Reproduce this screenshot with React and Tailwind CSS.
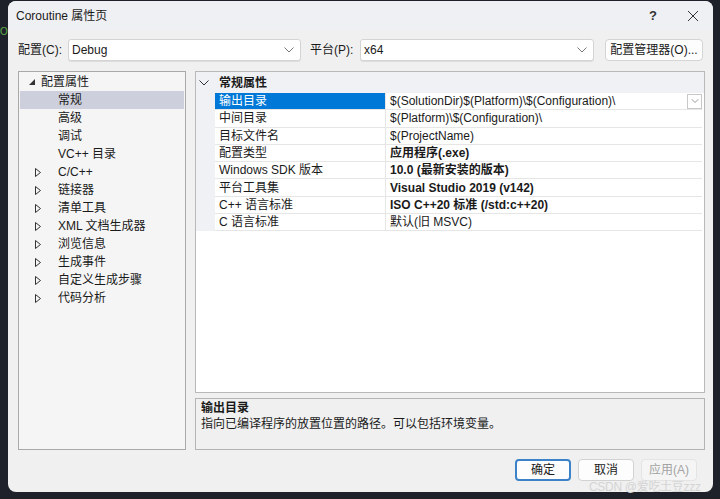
import { useState } from "react";

const font = { fontFamily: '"Liberation Sans", "Noto Sans CJK SC", sans-serif' };

const treeItems = [
  { label: "常规", selected: true },
  { label: "高级" },
  { label: "调试" },
  { label: "VC++ 目录" },
  { label: "C/C++", collapsed: true },
  { label: "链接器", collapsed: true },
  { label: "清单工具", collapsed: true },
  { label: "XML 文档生成器", collapsed: true },
  { label: "浏览信息", collapsed: true },
  { label: "生成事件", collapsed: true },
  { label: "自定义生成步骤", collapsed: true },
  { label: "代码分析", collapsed: true },
];

const props = [
  { name: "输出目录", value: "$(SolutionDir)$(Platform)\\$(Configuration)\\" },
  { name: "中间目录", value: "$(Platform)\\$(Configuration)\\" },
  { name: "目标文件名", value: "$(ProjectName)" },
  { name: "配置类型", value: "应用程序(.exe)", bold: true },
  { name: "Windows SDK 版本", value: "10.0 (最新安装的版本)", bold: true },
  { name: "平台工具集", value: "Visual Studio 2019 (v142)", bold: true },
  { name: "C++ 语言标准", value: "ISO C++20 标准 (/std:c++20)", bold: true },
  { name: "C 语言标准", value: "默认(旧 MSVC)" },
];

function Chevron({ className = "" }) {
  return (
    <svg width="10" height="6" viewBox="0 0 10 6" className={className}>
      <path d="M0.5 0.5 L5 5 L9.5 0.5" fill="none" stroke="currentColor" strokeWidth="1" />
    </svg>
  );
}

function Combo({ value, width }) {
  return (
    <div className={`${width} h-[22px] bg-white border border-[#d4d4d4] rounded-[3px] flex items-center justify-between pl-[3px] pr-[6px] shadow-[0_1px_0_rgba(0,0,0,0.08)]`}>
      <span>{value}</span>
      <Chevron className="text-[#777]" />
    </div>
  );
}

function Button({ children, primary, disabled }) {
  const base = "w-[56px] h-[22px] rounded-[4px] flex items-center justify-center";
  if (primary) return <div className={`${base} bg-[#fdfdfd] border-2 border-[#3b82c8]`}>{children}</div>;
  if (disabled) return <div className={`${base} bg-[#f5f5f5] border border-[#e4e4e4] text-[#a3a3a3]`}>{children}</div>;
  return <div className={`${base} bg-[#fdfdfd] border border-[#d2d2d2]`}>{children}</div>;
}

export default function App() {
  const [sel, setSel] = useState(0);
  return (
    <div className="w-[720px] h-[499px] bg-[#1e2129] relative overflow-hidden text-[12px] text-[#1a1a1a]" style={font}>
      <span className="absolute left-0 top-[24px] text-[10px] text-[#5fae4a]">O</span>

      <div className="ml-[8px] mt-[1px] w-[705px] h-[491px] rounded-[8px] bg-[#f0f0f0] flex flex-col overflow-hidden">
        {/* title bar */}
        <div className="h-[29px] flex items-center pl-[8px] pr-[14px] bg-[#eff0f3]">
          <span className="flex-1 pt-[1px]">Coroutine 属性页</span>
          <span className="text-[13px] font-bold mr-[30px] text-[#333]">?</span>
          <svg width="12" height="12" viewBox="0 0 12 12" className="text-[#333]">
            <path d="M1 1 L11 11 M11 1 L1 11" stroke="currentColor" strokeWidth="1" />
          </svg>
        </div>

        {/* config row */}
        <div className="flex items-center pl-[10px] pt-[9px]">
          <span className="w-[50px]">配置(C):</span>
          <Combo value="Debug" width="w-[233px]" />
          <span className="ml-[9px] w-[50px]">平台(P):</span>
          <Combo value="x64" width="w-[234px]" />
          <div className="ml-[11px] w-[98px] h-[22px] bg-[#fdfdfd] border border-[#d4d4d4] rounded-[4px] flex items-center justify-center">
            配置管理器(O)...
          </div>
        </div>

        {/* main */}
        <div className="flex mt-[10px] pl-[10px] pr-[8px] gap-[9px] h-[379px]">
          <div className="w-[168px] bg-[#f5f5f5] border border-[#a9a9a9] pt-[1px] px-[1px]">
            <div className="h-[18px] flex items-center">
              <svg width="6" height="6" viewBox="0 0 6 6" className="ml-[9px] mr-[6px]">
                <path d="M6 0 L6 6 L0 6 Z" fill="#333" />
              </svg>
              <span>配置属性</span>
            </div>
            {treeItems.map((t, i) => (
              <div key={i} className={`h-[18px] flex items-center ${t.selected ? "bg-[#cdd0dc]" : ""}`}>
                <span className="w-[27px] shrink-0 flex justify-end pr-[6px]">
                  {t.collapsed && (
                    <svg width="6" height="9" viewBox="0 0 6 9">
                      <path d="M0.5 0.5 L5.5 4.5 L0.5 8.5 Z" fill="none" stroke="#333" strokeWidth="1" />
                    </svg>
                  )}
                </span>
                <span className="ml-[11px]">{t.label}</span>
              </div>
            ))}
          </div>

          <div className="flex-1 flex flex-col gap-[5px]">
            <div className="h-[322px] bg-white border border-[#b9b9b9] flex flex-col">
              <div className="h-[21px] bg-[#f0f1f4] flex items-center shrink-0">
                <Chevron className="ml-[3px] text-[#333]" />
                <span className="ml-[10px] font-bold">常规属性</span>
              </div>
              {props.map((p, i) => (
                <div key={i} className="h-[17.3px] shrink-0 flex" onClick={() => setSel(i)}>
                  <div className="w-[19px] bg-[#f0f1f4]" />
                  <div className={`w-[171px] pl-[4px] flex items-center border-b border-r border-[#e6e6e6] ${sel === i ? "bg-[#0078d7] text-white" : ""}`}>
                    {p.name}
                  </div>
                  <div className={`flex-1 pl-[4px] flex items-center justify-between border-b border-[#e6e6e6] mr-[2px] ${p.bold ? "font-bold" : ""}`}>
                    <span>{p.value}</span>
                    {sel === i && (
                      <div className="w-[15px] h-[15px] border border-[#c8c8c8] bg-white flex items-center justify-center">
                        <Chevron className="text-[#777] scale-75" />
                      </div>
                    )}
                  </div>
                </div>
              ))}
            </div>
            <div className="flex-1 bg-[#f0f0f0] border border-[#b4b4b4] px-[5px] pt-[1px] leading-[16px]">
              <div className="font-bold">输出目录</div>
              <div>指向已编译程序的放置位置的路径。可以包括环境变量。</div>
            </div>
          </div>
        </div>

        {/* buttons */}
        <div className="flex justify-end gap-[7px] mt-[9px] pr-[16px]">
          <Button primary>确定</Button>
          <Button>取消</Button>
          <Button disabled>应用(A)</Button>
        </div>
      </div>

      <span className="absolute left-[589px] top-[481px] leading-none text-[12px] text-[#d4d4d4] tracking-tight">CSDN @爱吃土豆zzz</span>
    </div>
  );
}
